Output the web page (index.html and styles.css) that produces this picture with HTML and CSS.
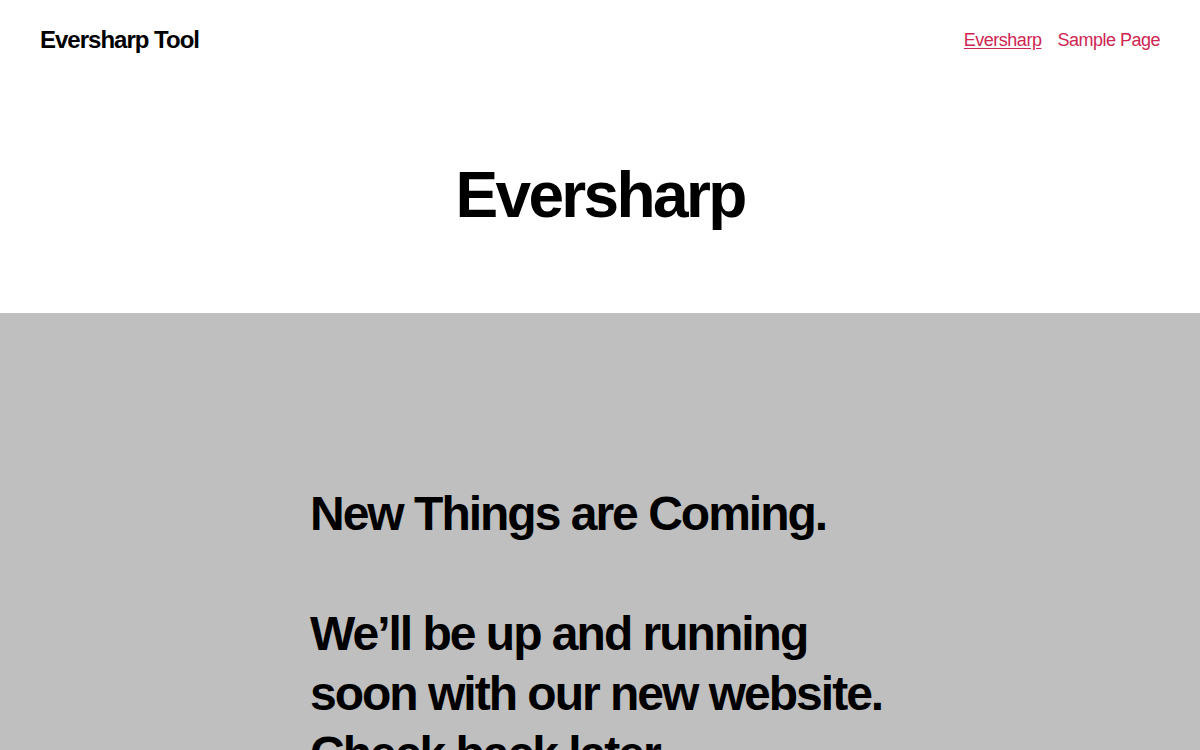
FILE: index.html
```html
<!DOCTYPE html>
<html lang="en">
<head>
<meta charset="utf-8">
<title>Eversharp – Eversharp Tool</title>
<link rel="stylesheet" href="styles.css">
</head>
<body>
<header class="site-header">
  <div class="site-title"><a href="#">Eversharp Tool</a></div>
  <nav class="primary-menu">
    <a href="#" class="current">Eversharp</a>
    <a href="#">Sample Page</a>
  </nav>
</header>
<main>
  <section class="entry-header">
    <h1 class="entry-title">Eversharp</h1>
  </section>
  <section class="cover">
    <div class="cover-inner">
      <p>New Things are Coming.</p>
      <p>We’ll be up and running soon with our new website. Check back later.</p>
    </div>
  </section>
</main>
</body>
</html>
```
FILE: styles.css
```css
html, body {
  margin: 0;
  padding: 0;
}
body {
  background: #fff;
  color: #000;
  font-family: "Liberation Sans", Arial, sans-serif;
}
a {
  color: inherit;
  text-decoration: none;
}
.site-header {
  display: flex;
  align-items: center;
  justify-content: space-between;
  padding: 26px 40px 25px 40px;
}
.site-title {
  font-size: 24px;
  font-weight: 700;
  line-height: 1.2;
  letter-spacing: -0.0415625em;
}
.primary-menu {
  display: flex;
  gap: 16px;
  font-size: 18px;
  line-height: 1.2;
  letter-spacing: -0.0277em;
}
.primary-menu a {
  color: #cd2653;
}
.primary-menu a.current {
  text-decoration: underline;
  text-underline-offset: 2px;
}
.entry-header {
  padding: 79px 0 82px;
  text-align: center;
}
.entry-title {
  margin: 0;
  font-size: 64px;
  line-height: 72px;
  font-weight: 700;
  letter-spacing: -0.0415625em;
}
.cover {
  background: #bfbfbf;
  padding: 171px 0 80px;
}
.cover-inner {
  width: 580px;
  margin: 0 auto;
  display: flex;
  flex-direction: column;
  gap: 60px;
}
.cover-inner p {
  margin: 0;
  font-size: 48px;
  line-height: 60px;
  font-weight: 700;
  letter-spacing: -0.0415625em;
}
```
